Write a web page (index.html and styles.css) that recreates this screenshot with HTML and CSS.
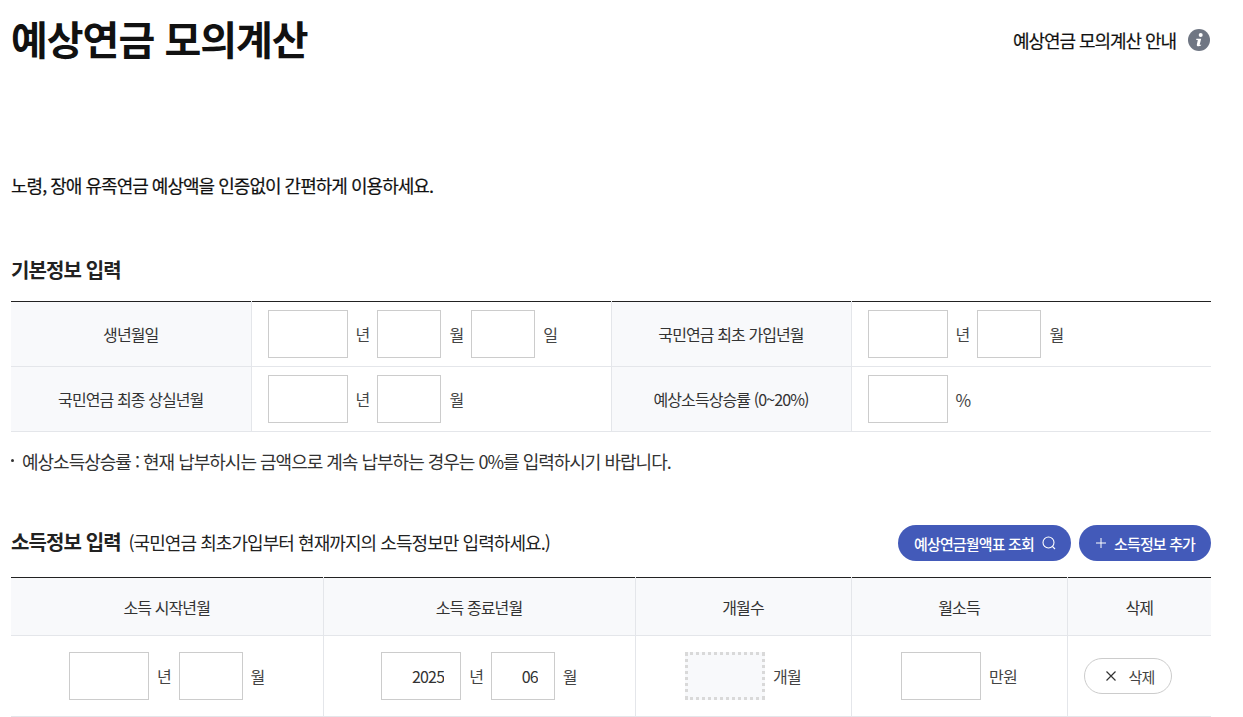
FILE: index.html
```html
<!DOCTYPE html>
<html lang="ko">
<head>
<meta charset="utf-8">
<title>예상연금 모의계산</title>
<link rel="stylesheet" href="styles.css">
</head>
<body>
<main class="page">
  <header class="page-head">
    <h1 class="page-title">예상연금 모의계산</h1>
    <a class="guide-link" href="#">예상연금 모의계산 안내
      <svg class="guide-icon" width="22" height="22" viewBox="0 0 22 22" aria-hidden="true"><circle cx="11" cy="11" r="11" fill="#6f7683"/><circle cx="12.700" cy="6" r="2" fill="#fff"/><path d="M8.400 9.700h4.800l-1.500 5.800c-.1.500.4.500 1.500.1l-.2 1c-1.300.7-4.500 1.200-4.200-.9l1-4.700H8.200z" fill="#fff"/></svg>
    </a>
  </header>
  <p class="intro">노령, 장애 유족연금 예상액을 인증없이 간편하게 이용하세요.</p>

  <h2 class="section-title basic-title">기본정보 입력</h2>
  <table class="form-table basic-table">
    <tbody>
      <tr>
        <th class="basic-th1">생년월일</th>
        <td class="basic-td1"><div class="fields"><input class="box w80"><span class="unit">년</span><input class="box w64"><span class="unit">월</span><input class="box w64"><span class="unit">일</span></div></td>
        <th class="basic-th2">국민연금 최초 가입년월</th>
        <td><div class="fields"><input class="box w80"><span class="unit">년</span><input class="box w64"><span class="unit">월</span></div></td>
      </tr>
      <tr>
        <th>국민연금 최종 상실년월</th>
        <td><div class="fields"><input class="box w80"><span class="unit">년</span><input class="box w64"><span class="unit">월</span></div></td>
        <th>예상소득상승률 (0~20%)</th>
        <td><div class="fields"><input class="box w80"><span class="unit percent">%</span></div></td>
      </tr>
    </tbody>
  </table>
  <p class="note">예상소득상승률 : 현재 납부하시는 금액으로 계속 납부하는 경우는 0%를 입력하시기 바랍니다.</p>

  <div class="income-head">
    <h2 class="section-title income-title">소득정보 입력 <span class="section-sub">(국민연금 최초가입부터 현재까지의 소득정보만 입력하세요.)</span></h2>
    <div class="actions">
      <button class="pill pill-search" type="button">예상연금월액표 조회
        <svg width="16" height="16" viewBox="0 0 16 16" aria-hidden="true"><circle cx="7.500" cy="7.500" r="5.500" fill="none" stroke="#fff" stroke-width="1.100"/><path d="M11.500 11.500l2.500 2.500" stroke="#fff" stroke-width="1.100"/></svg>
      </button>
      <button class="pill pill-add" type="button">
        <svg width="10" height="10" viewBox="0 0 10 10" aria-hidden="true"><path d="M5 0v10M0 5h10" stroke="#fff" stroke-width="1"/></svg>
        소득정보 추가
      </button>
    </div>
  </div>
  <table class="form-table income-table">
    <thead>
      <tr>
        <th class="inc-c1">소득 시작년월</th>
        <th class="inc-c2">소득 종료년월</th>
        <th class="inc-c3">개월수</th>
        <th class="inc-c4">월소득</th>
        <th class="inc-c5">삭제</th>
      </tr>
    </thead>
    <tbody>
      <tr>
        <td><div class="fields center"><input class="box w80"><span class="unit">년</span><input class="box w64"><span class="unit">월</span></div></td>
        <td><div class="fields center"><input class="box w80 num" value="2025"><span class="unit">년</span><input class="box w64 num" value="06"><span class="unit">월</span></div></td>
        <td><div class="fields center"><input class="box w80 readonly" readonly><span class="unit">개월</span></div></td>
        <td><div class="fields center"><input class="box w80"><span class="unit">만원</span></div></td>
        <td><div class="fields"><button class="del" type="button"><svg width="10" height="10" viewBox="0 0 10 10" aria-hidden="true"><path d="M.5.500l9 9M9.500.500l-9 9" stroke="#333" stroke-width="1.200"/></svg>삭제</button></div></td>
      </tr>
    </tbody>
  </table>
</main>
</body>
</html>
```
FILE: styles.css
```css
* { box-sizing: border-box; }
html, body { margin: 0; padding: 0; background: #fff; }
body {
  font-family: "Noto Sans CJK KR", "Noto Sans", sans-serif;
  color: #222;
  font-size: 16px;
  letter-spacing: -0.9px;
}
.page { width: 1211px; padding-left: 11px; }
.page-head { display: flex; justify-content: space-between; align-items: center; height: 80px; }
.page-title { margin: 0; font-size: 40px; line-height: 58px; font-weight: 700; letter-spacing: -1px; color: #111; position: relative; top: -2px; }
.guide-link { display: flex; align-items: center; gap: 12px; font-size: 18px; letter-spacing: -1.05px; color: #111; text-decoration: none; margin-right: 1px; -webkit-text-stroke: 0.2px #111; }
.intro { margin: 91px 0 0; font-size: 18px; line-height: 28px; letter-spacing: -0.98px; color: #111; -webkit-text-stroke: 0.2px #111; }
.section-title { margin: 0; font-size: 20px; line-height: 30px; font-weight: 700; color: #222; letter-spacing: -0.9px; }
.basic-title { margin-top: 56px; }
.income-title { margin-bottom: 2px; }
.section-sub { font-size: 18px; font-weight: 400; margin-left: 3px; letter-spacing: -0.93px; }
.form-table { width: 1200px; border-collapse: collapse; table-layout: fixed; border-top: 1px solid #222; }
.basic-table { margin-top: 16px; }
.form-table th, .form-table td { border: 1px solid #e4e6ea; padding: 0; font-weight: 400; text-align: center; }
.form-table th:first-child, .form-table td:first-child { border-left: 0; }
.form-table th:last-child, .form-table td:last-child { border-right: 0; }
.form-table tr:first-child th, .form-table tr:first-child td { border-top: 0; }
.form-table th { background: #f8f9fb; color: #333; }
.basic-table th, .basic-table td { height: 65px; }
.basic-th1 { width: 240px; }
.basic-td1 { width: 360px; }
.basic-th2 { width: 240px; }
.fields { display: flex; align-items: center; padding-left: 16px; }
.fields.center { justify-content: center; padding-left: 0; }
.box { display: block; height: 48px; border: 1px solid #ccc; background: #fff; font: inherit; letter-spacing: -0.8px; color: #333; padding: 0 16px; text-align: right; border-radius: 0; outline: 0; }
.w80 { width: 80px; }
.w64 { width: 64px; }
.unit { margin: 0 7.6px 0 8px; color: #444; letter-spacing: -0.8px; }
.unit:last-child { margin-right: 0; }
.basic-table .w64 + .unit { margin-left: 8.6px; margin-right: 7px; }
.percent { font-size: 17px; }
.readonly { border: 3px dotted #d9d9d9; background: #f8f9fb; }
.note { margin: 15px 0 0; font-size: 18px; line-height: 28px; padding-left: 11px; position: relative; color: #333; letter-spacing: -1px; }
.note::before { content: ""; position: absolute; left: 0; top: 12px; width: 3px; height: 3px; border-radius: 50%; background: #333; }
.income-head { display: flex; justify-content: space-between; align-items: center; margin-top: 50px; height: 36px; }
.actions { display: flex; gap: 8px; }
.pill { display: flex; align-items: center; height: 36px; border: 0; border-radius: 18px; background: #435ab9; color: #fff; font: inherit; font-size: 15px; font-weight: 500; letter-spacing: -0.85px; }
.pill-search { width: 173px; padding: 0 0 0 16px; gap: 7px; }
.pill-add { width: 132px; padding: 0 0 0 17px; gap: 8px; }
.income-table { margin-top: 16px; }
.income-table thead th { height: 58px; }
.income-table tbody td { height: 81px; }
.inc-c1, .inc-c2 { width: 312px; }
.inc-c3, .inc-c4 { width: 216px; }
.del { display: flex; align-items: center; gap: 13px; height: 36px; width: 88px; padding: 0 0 0 21px; background: #fff; border: 1px solid #ccc; border-radius: 18px; font: inherit; font-size: 15px; letter-spacing: -0.8px; color: #444; }
```
